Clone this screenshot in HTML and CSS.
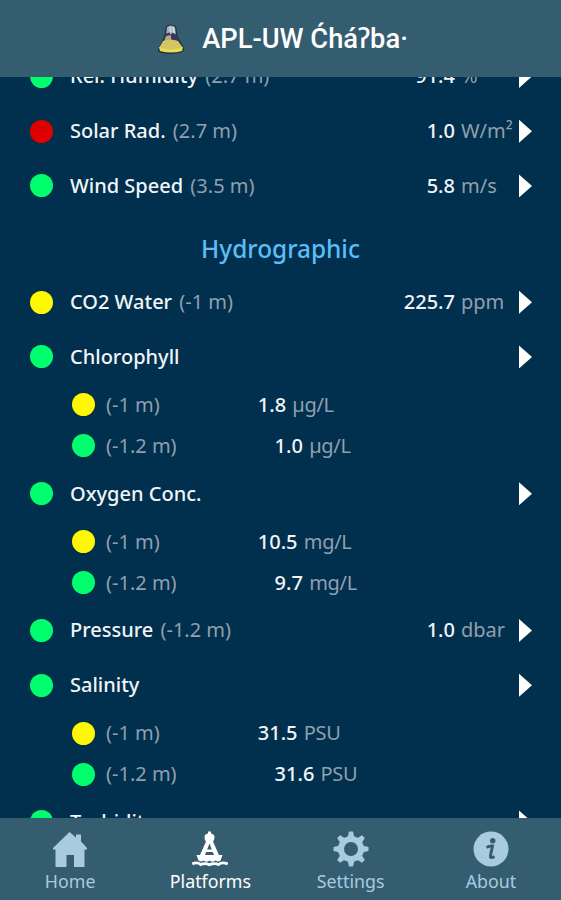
FILE: index.html
```
<!DOCTYPE html>
<html lang="en">
  <head>
    <meta charset="UTF-8" />
    <meta name="viewport" content="width=device-width, initial-scale=1.0" />
    <title>APL-UW Ćháʔba·</title>
    <link rel="stylesheet" href="styles.css">
  </head>
  <body>
    <header class="header">
      <svg class="buoy" viewBox="0 0 30 32">
        <path d="M10 3 Q15 0 20 3 L22 14 L28 25 Q29 29 23 30 Q14 32 5 30 Q0 28 3 24 L8 14Z" fill="#25333a" />
        <path d="M11 4 Q15 1 19 4 L20 12 H10Z" fill="#a5afba" />
        <path d="M9 11 L15 9 L21 12 L23 19 L15 18 L7 19Z" fill="#3b365a" />
        <path d="M10 13 L15 12 L15 19 L8 19Z" fill="#b3a88c" />
        <path d="M7 18 Q15 15 22 18 L27 25 Q15 30 3 25Z" fill="#d6c563" />
        <path d="M3 24 Q15 29 27 24 L26 28 Q15 31 4 28Z" fill="#eadc55" />
        <path d="M14 4 L15 11 M17 4 L18 10" stroke="#dce5ed" stroke-width="1.5" />
      </svg>
      <h1 class="title">APL-UW Ćháʔba·</h1>
    </header>

    <main class="content">
      <div class="list">
        <div class="row">
          <span class="dot green"></span>
          <span class="name">Rel. Humidity <span class="dim">(2.7 m)</span></span>
          <span class="value">91.4</span><span class="unit">%</span>
          <span class="arrow"></span>
        </div>
        <div class="row">
          <span class="dot red"></span>
          <span class="name">Solar Rad. <span class="dim">(2.7 m)</span></span>
          <span class="value">1.0</span><span class="unit">W/m²</span>
          <span class="arrow"></span>
        </div>
        <div class="row">
          <span class="dot green"></span>
          <span class="name">Wind Speed <span class="dim">(3.5 m)</span></span>
          <span class="value">5.8</span><span class="unit">m/s</span>
          <span class="arrow"></span>
        </div>

        <h2 class="section">Hydrographic</h2>

        <div class="row">
          <span class="dot yellow"></span>
          <span class="name">CO2 Water <span class="dim">(-1 m)</span></span>
          <span class="value">225.7</span><span class="unit">ppm</span>
          <span class="arrow"></span>
        </div>
        <div class="row">
          <span class="dot green"></span>
          <span class="name">Chlorophyll</span>
          <span class="arrow"></span>
        </div>
        <div class="subrow">
          <span class="dot yellow"></span>
          <span class="depth">(-1 m)</span>
          <span class="value">1.8 <span class="dim">µg/L</span></span>
        </div>
        <div class="subrow">
          <span class="dot green"></span>
          <span class="depth">(-1.2 m)</span>
          <span class="value">1.0 <span class="dim">µg/L</span></span>
        </div>
        <div class="row">
          <span class="dot green"></span>
          <span class="name">Oxygen Conc.</span>
          <span class="arrow"></span>
        </div>
        <div class="subrow">
          <span class="dot yellow"></span>
          <span class="depth">(-1 m)</span>
          <span class="value">10.5 <span class="dim">mg/L</span></span>
        </div>
        <div class="subrow">
          <span class="dot green"></span>
          <span class="depth">(-1.2 m)</span>
          <span class="value">9.7 <span class="dim">mg/L</span></span>
        </div>
        <div class="row">
          <span class="dot green"></span>
          <span class="name">Pressure <span class="dim">(-1.2 m)</span></span>
          <span class="value">1.0</span><span class="unit">dbar</span>
          <span class="arrow"></span>
        </div>
        <div class="row">
          <span class="dot green"></span>
          <span class="name">Salinity</span>
          <span class="arrow"></span>
        </div>
        <div class="subrow">
          <span class="dot yellow"></span>
          <span class="depth">(-1 m)</span>
          <span class="value">31.5 <span class="dim">PSU</span></span>
        </div>
        <div class="subrow">
          <span class="dot green"></span>
          <span class="depth">(-1.2 m)</span>
          <span class="value">31.6 <span class="dim">PSU</span></span>
        </div>
        <div class="row">
          <span class="dot green"></span>
          <span class="name">Turbidity</span>
          <span class="arrow"></span>
        </div>
      </div>
    </main>

    <nav class="tabs">
      <a class="tab">
        <svg viewBox="0 0 36 36" fill="currentColor">
          <path d="M17.500 1 L24 6.500 V3.500 H29 V10.500 L35 17 V18.500 H32.500 V36 H22 V24 H14.500 V36 H3.500 V18.500 H1 V17Z" />
        </svg>
        <span>Home</span>
      </a>
      <a class="tab active">
        <svg viewBox="0 0 36 36" fill="currentColor">
          <path d="M16 2.500 V.5 H19 V2.500 Q22.500 3 22.500 6 Q22.500 9 21 10.500 L27 24 H30.500 L28.500 29.500 Q26 31.500 23.500 29.500 Q20.500 32 17.500 29.500 Q14.500 32 11.500 29.500 Q9 31.500 6.500 29.500 L4.500 24 H8 L14 10.500 Q12.500 9 12.500 6 Q12.500 3 16 2.500Z M17.500 12.500 L15.200 18.500 H19.800Z M14.200 21 L13 24 H22 L20.800 21Z" fill-rule="evenodd" />
          <path d="M.3 33 Q5 30.500 8.500 33.500 Q13 31.500 17.500 33.700 Q22 31.500 26.500 33.500 Q30 30.500 35.700 33" fill="none" stroke="currentColor" stroke-width="2.800" />
        </svg>
        <span>Platforms</span>
      </a>
      <a class="tab">
        <svg viewBox="0 0 36 36">
          <circle cx="18" cy="18" r="10" fill="none" stroke="currentColor" stroke-width="6" />
          <g fill="currentColor">
            <path id="tooth" d="M14.500 7 L16 .5 H20 L21.500 7Z" />
            <use href="#tooth" transform="rotate(45 18 18)" />
            <use href="#tooth" transform="rotate(90 18 18)" />
            <use href="#tooth" transform="rotate(135 18 18)" />
            <use href="#tooth" transform="rotate(180 18 18)" />
            <use href="#tooth" transform="rotate(225 18 18)" />
            <use href="#tooth" transform="rotate(270 18 18)" />
            <use href="#tooth" transform="rotate(315 18 18)" />
          </g>
        </svg>
        <span>Settings</span>
      </a>
      <a class="tab">
        <svg viewBox="0 0 36 36">
          <circle cx="18" cy="18" r="17.500" fill="currentColor" />
          <circle cx="19.700" cy="9.800" r="2.700" fill="#345d70" />
          <path d="M13.500 16.500 Q17 14.500 19.500 15 L17.500 24.500 Q17 28 21.500 25.500" fill="none" stroke="#345d70" stroke-width="3" />
        </svg>
        <span>About</span>
      </a>
    </nav>
  </body>
</html>
```
FILE: styles.css
```
* {
  box-sizing: border-box;
}
body {
  height: 100vh;
  margin: 0;
  display: flex;
  flex-direction: column;
  overflow: hidden;
  background: #00304d;
  color: #f2f4f8;
  font-family: "Noto Sans", "Open Sans", sans-serif;
  font-size: 20px;
}
.header {
  height: 77px;
  flex-shrink: 0;
  display: flex;
  align-items: center;
  justify-content: center;
  gap: 16px;
  padding-left: 3px;
  background: #345d70;
}
.buoy {
  width: 30px;
  height: 32px;
}
.title {
  margin: -2px 0 0;
  font-family: Roboto, "Noto Sans", sans-serif;
  font-size: 27.3px;
  font-weight: 500;
  color: white;
}
.content {
  flex: 1;
  min-height: 0;
  overflow: hidden;
}
.list {
  margin-top: -28px;
}
.row {
  height: 54.75px;
  padding: 0 29px 0 30px;
  display: flex;
  align-items: center;
  white-space: nowrap;
}
.subrow {
  height: 41px;
  padding-left: 72px;
  display: flex;
  align-items: center;
  white-space: nowrap;
}
.dot {
  width: 23px;
  height: 23px;
  flex-shrink: 0;
  border-radius: 50%;
}
.green {
  background: #00ff6c;
}
.yellow {
  background: #fff800;
}
.red {
  background: #e10000;
}
.name {
  flex: 1;
  margin-left: 17px;
}
.name,
.value {
  font-weight: 500;
}
.name,
.value,
.unit,
.depth {
  padding-bottom: 1px;
}
.dim,
.unit,
.depth {
  font-weight: 400;
  color: #929fae;
}
.dim {
  margin-left: 2px;
}
.subrow .dim {
  margin-left: 1px;
  letter-spacing: -0.3px;
}
.unit {
  width: 58px;
  margin-left: 6px;
}
.depth {
  margin: 0 98px 0 11px;
}
.arrow {
  width: 13px;
  height: 23px;
  background: white;
  clip-path: polygon(0 0, 100% 50%, 0 100%);
}
.section {
  height: 61.6px;
  margin: 0;
  padding-top: 8px;
  display: flex;
  align-items: center;
  justify-content: center;
  font-size: 24.4px;
  font-weight: 500;
  color: #5dbdf7;
}
.tabs {
  height: 82px;
  flex-shrink: 0;
  display: flex;
  background: #345d70;
}
.tab {
  flex: 1;
  padding-top: 13px;
  display: flex;
  flex-direction: column;
  align-items: center;
  font-size: 17.8px;
  line-height: 28px;
  color: #a9cbe0;
}
.tab svg {
  width: 36px;
  height: 36px;
}
.active {
  color: white;
}
```
